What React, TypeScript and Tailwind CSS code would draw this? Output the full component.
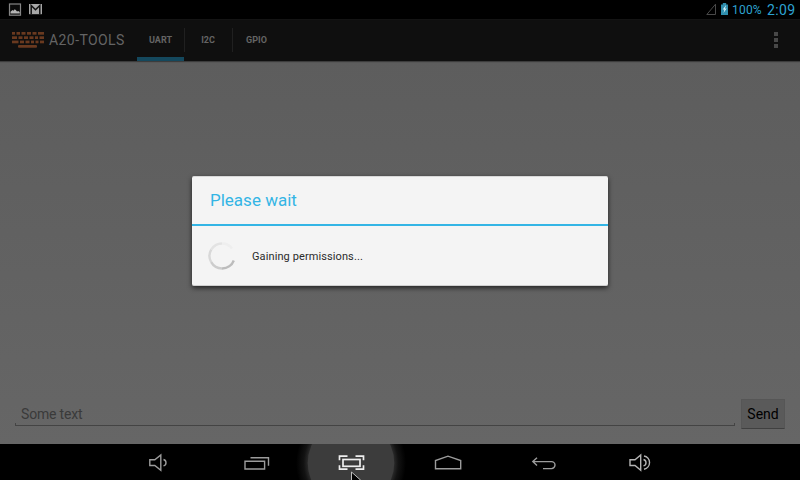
import type { ReactNode } from "react";

function PictureIcon() {
  return (
    <svg className="block h-[19px] w-[14px]" viewBox="8 0 14 19">
      <rect x="9.5" y="4" width="11" height="11.200" fill="#0a0a0a" stroke="#858585" strokeWidth="1.200" />
      <path d="M10.500 13.600v-1.800l2-1.900 1 .8 1.200-1.500 1.300 1 1 1.200 1.200-.3 1.500 1v1.500z" fill="#b4b4b4" />
    </svg>
  );
}

function MailIcon() {
  return (
    <svg className="block h-[19px] w-[14px]" viewBox="29 0 14 19">
      <rect x="29" y="4" width="13" height="10.200" fill="#a6a6a6" />
      <path d="M31.200 14.200V5.500l4.300 4.200L39.800 5.500v8.700" fill="none" stroke="#111" strokeWidth="1.500" />
    </svg>
  );
}

function StatusBar() {
  return (
    <header className="flex h-[19px] shrink-0 items-center bg-black text-[#2da3d1]">
      <div className="flex gap-[7px] pl-2">
        <PictureIcon />
        <MailIcon />
      </div>
      <div className="ml-auto flex items-center pr-[5px]">
        <svg className="block h-[19px] w-[26px]" viewBox="705 0 26 19">
          <path d="M706.800 14.500L715.500 4.200V14.500Z" fill="none" stroke="#4a4a4a" />
          <path d="M721 4.500h1.800V3h3.400v1.500h1.800V15h-7z" fill="#2f8fae" />
          <path d="M725.700 5.500l-3 4.100h1.700l-.9 3.400 3.200-4.400h-1.800l1.200-3.100z" fill="#d8f1f8" />
        </svg>
        <span className="ml-[1px] mt-px w-[35px] whitespace-nowrap text-[12px] leading-[19px] tracking-[0.2px]">100%</span>
        <span className="w-[28px] whitespace-nowrap text-[14px] leading-[20px] tracking-[0.35px]">2:09</span>
      </div>
    </header>
  );
}

const keyRows = [
  [[12, 3], [16.500, 3.500], [21.500, 4], [27, 4], [32.500, 4], [38, 6]],
  [[12, 5], [18.500, 4], [24, 4], [29.500, 4], [35, 3], [39.500, 4.500]],
  [[12, 6.500], [20, 4], [25.500, 4], [31, 3], [35.500, 3], [40, 4]],
];

function KeyboardLogo() {
  return (
    <svg className="block h-[42px] w-[32px]" viewBox="12 19 32 42" fill="#69391f">
      {keyRows.map((row, i) =>
        row.map(([x, w]) => <rect key={`${i}-${x}`} x={x} y={32 + i * 4.300} width={w} height="2.700" />),
      )}
      <rect x="18" y="45" width="19" height="2.800" rx="1" />
    </svg>
  );
}

function ActionBar() {
  return (
    <div className="z-10 flex h-[42px] shrink-0 border-t border-[#141414] bg-[#0f0f0f] pl-3 shadow-[0_1px_1px_rgba(0,0,0,0.35)]">
      <div className="-mt-px">
        <KeyboardLogo />
      </div>
      <h1 className="ml-[5px] w-[88px] whitespace-nowrap text-[14px] leading-[41px] tracking-[0.42px] text-[#646464]">A20-TOOLS</h1>
      <nav className="flex items-stretch text-center text-[9px] font-bold leading-[41px] text-[#646464]">
        <div className="w-[47px] border-b-4 border-[#14485d]">
          <span className="block">UART</span>
        </div>
        <div className="mb-[9px] mt-2 w-px bg-[#202020]" />
        <div className="w-[47px] pr-px">I2C</div>
        <div className="mb-[9px] mt-2 w-px bg-[#202020]" />
        <div className="w-[48px] pr-px">GPIO</div>
      </nav>
      <div className="ml-auto mr-[22px] mt-[12px] flex flex-col gap-[2px]">
        <i className="h-1 w-1 bg-[#484848]" />
        <i className="h-1 w-1 bg-[#484848]" />
        <i className="h-1 w-1 bg-[#484848]" />
      </div>
    </div>
  );
}

function WaitDialog() {
  return (
    <section className="h-[110px] w-[416px] rounded-[2px] border-y border-t-[#d8d8d8] border-b-[#cfcfcf] bg-[#f4f4f4] shadow-[0_2px_5px_rgba(0,0,0,0.65)]">
      <h2 className="h-[47px] pl-[18px] text-[17px] leading-[47px] text-[#33b5e5]">Please wait</h2>
      <div className="h-[2px] bg-[#33b5e5]" />
      <div className="flex h-[60px] items-center pl-4">
        <svg className="block h-[28px] w-[28px]" viewBox="0 0 28 28" fill="none" strokeWidth="2.400">
          <path d="M14 1.500A12.500 12.500 0 0 1 24 6.500" stroke="#eeeeee" />
          <path d="M3.200 7.700A12.500 12.500 0 0 1 14 1.500" stroke="#e3e3e3" />
          <path d="M3.200 20.200A12.500 12.500 0 0 1 3.200 7.700" stroke="#d8d8d8" />
          <path d="M14 26.500A12.500 12.500 0 0 1 3.200 20.200" stroke="#cccccc" />
          <path d="M25.800 18.500A12.500 12.500 0 0 1 14 26.500" stroke="#bcbcbc" />
        </svg>
        <p className="ml-4 mt-[2px] whitespace-nowrap text-[11px] leading-4 tracking-[0.1px] text-[#2b2b2b]">Gaining permissions...</p>
      </div>
    </section>
  );
}

function Content() {
  return (
    <main className="flex h-[383px] flex-col items-center bg-gradient-to-b from-[#5d5d5d] to-[#666666] pt-[115px]">
      <WaitDialog />
      <div className="mt-auto flex h-[46px] w-full items-start pl-[15px]">
        <div className="flex h-[28px] w-[720px] flex-col">
          <span className="h-[25px] pl-[6px] text-[14px] leading-[32px] tracking-[-0.18px] text-[#3a3a3a]">Some text</span>
          <div className="h-[3px] border-x border-b border-[#444]" />
        </div>
        <button className="ml-[6px] mt-px h-[30px] w-[44px] rounded-[1px] border border-[#565656] border-b-[#404040] bg-[#5a5a5a] text-[14px] leading-[28px] text-black">
          Send
        </button>
      </div>
    </main>
  );
}

function NavItem({ viewBox, children }: { viewBox: string; children: ReactNode }) {
  return (
    <svg className="block h-[36px] w-[96px] shrink-0" viewBox={viewBox} fill="none" stroke="#9c9c9c" strokeWidth="1.400">
      {children}
    </svg>
  );
}

function NavigationBar() {
  return (
    <footer className="flex h-9 shrink-0 bg-black pl-28">
      <NavItem viewBox="112 444 96 36">
        <path d="M149.800 459.700h5l6-4.700v15.200l-6-4.700h-5z" />
        <path d="M163.500 459.500a3.300 3.300 0 0 1 0 6.400" />
      </NavItem>
      <NavItem viewBox="208 444 96 36">
        <path d="M245 461.200h19.600v7.800H245zM250.500 457.700h18v8" />
      </NavItem>
      <svg className="-mx-3 block h-[36px] w-[120px] shrink-0" viewBox="292 444 120 36" fill="none">
        <defs>
          <radialGradient id="touch">
            <stop offset="0.780" stopColor="#2a2a2a" />
            <stop offset="0.860" stopColor="#121212" />
            <stop offset="1" stopColor="#000" />
          </radialGradient>
        </defs>
        <circle cx="351" cy="463" r="55" fill="url(#touch)" />
        <circle cx="351" cy="463" r="43.300" fill="#3c3c3c" />
        <path d="M347.500 456.200h-8v4M355.500 456.200h8v4M347.500 469.200h-8v-4M355.500 469.200h8v-4" stroke="#eeeeee" strokeWidth="1.700" />
        <rect x="343" y="459.500" width="17" height="6.800" stroke="#eeeeee" strokeWidth="1.700" />
        <path d="M351.500 472v12l9-4z" fill="#000" stroke="#bcbcbc" strokeWidth="1" />
      </svg>
      <NavItem viewBox="400 444 96 36">
        <path d="M435.500 468.700v-8.200l12.500-4.300 12.700 4.300v8.200z" />
      </NavItem>
      <NavItem viewBox="496 444 96 36">
        <path d="M537 457.700l-4.200 3.900 4.200 3.900M533 461.600h18.500a3.500 3.500 0 0 1 0 7H543" />
      </NavItem>
      <NavItem viewBox="592 444 96 36">
        <g stroke="#b4b4b4">
          <path d="M630 459.700h5l5.700-4.700v15.200l-5.700-4.700h-5zM643.500 459.500a3.300 3.300 0 0 1 0 6.400M644 456a6.700 6.700 0 0 1 0 13.200" />
        </g>
      </NavItem>
    </footer>
  );
}

export default function App() {
  return (
    <div className="flex h-[480px] w-[800px] flex-col overflow-hidden bg-black font-[Roboto,sans-serif]">
      <StatusBar />
      <ActionBar />
      <Content />
      <NavigationBar />
    </div>
  );
}
